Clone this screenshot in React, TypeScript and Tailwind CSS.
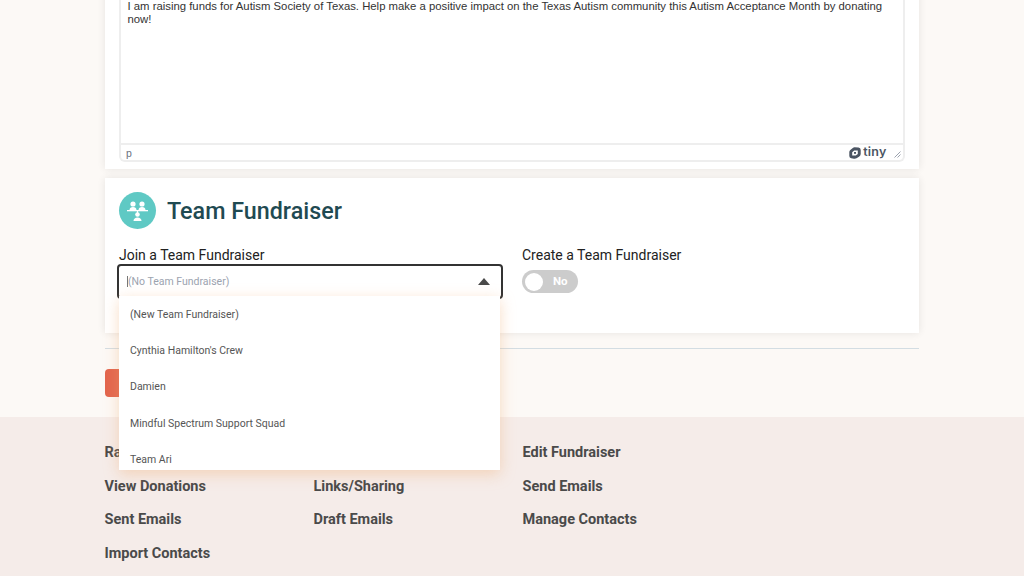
const footerLinks = [
  ["Raise Funds", "Fundraiser Page", "Edit Fundraiser"],
  ["View Donations", "Links/Sharing", "Send Emails"],
  ["Sent Emails", "Draft Emails", "Manage Contacts"],
  ["Import Contacts"],
];

const teams = [
  "(New Team Fundraiser)",
  "Cynthia Hamilton's Crew",
  "Damien",
  "Mindful Spectrum Support Squad",
  "Team Ari",
];

function TeamIcon() {
  return (
    <div className="flex h-[37px] w-[37px] items-center justify-center rounded-full bg-[#5fc9c4]">
      <svg width="23" height="23" viewBox="0 0 23 23" fill="#ffffff">
        <circle cx="7" cy="5" r="2.6" />
        <circle cx="16" cy="5" r="2.6" />
        <path d="M3.5 11c0-2 1.5-3 3.5-3s3.500 1 3.500 3zM12.500 11c0-2 1.500-3 3.500-3s3.500 1 3.500 3z" />
        <rect x="1" y="11" width="21" height="1.300" />
        <rect x="10.900" y="11" width="1.200" height="3" />
        <circle cx="11.500" cy="15.500" r="2.300" />
        <path d="M7.500 22c0-2 1.800-3.400 4-3.400s4 1.400 4 3.400z" />
      </svg>
    </div>
  );
}

function TinyLogo() {
  return (
    <div className="flex items-center gap-[2px] text-[#4b5563]">
      <svg width="12" height="12" viewBox="0 0 12 12">
        <path
          fill="#4b5563"
          fillRule="evenodd"
          d="M5.500 0.300L9.500 0.600Q11.700 0.800 11.700 3V7Q11.700 8.800 10 9.800L7.500 11.300Q6.300 12 5 11.700L2.200 11.200Q0.300 10.800 0.300 9V5Q0.300 3.800 1.300 3L3.800 1Q4.600 0.300 5.500 0.300ZM3.200 5.200V8.600H6.800L8.800 7V3.500H5.200Z"
        />
        <rect x="5" y="5" width="2" height="1.800" fill="#4b5563" />
      </svg>
      <span className="text-[12.500px] font-semibold leading-none font-['Inter',sans-serif] tracking-[0.2px]">tiny</span>
    </div>
  );
}

function Editor() {
  return (
    <section className="mr-[0.5px] h-[190px] bg-white pb-[7px] pl-[14.500px] pr-[14.500px] shadow-[0_0_8px_rgba(0,0,0,0.09)]">
      <div className="flex h-full flex-col rounded-b-[6px] border-x-2 border-b-2 border-[#eeeeee]">
        <div className="flex-1 pl-[6.500px] pr-[8px] pt-[21px] font-['Liberation_Sans',sans-serif] text-[11.330px] leading-[13px] text-[#333333]">
          I am raising funds for Autism Society of Texas. Help make a positive impact on the Texas Autism community this Autism Acceptance Month by donating now!
        </div>
        <div className="flex h-[17px] items-center justify-between border-t-2 border-[#eeeeee] pl-[5px] pr-[2px]">
          <span className="mt-[2px] font-['Liberation_Sans',sans-serif] text-[10.500px] text-[#6b7280]">p</span>
          <div className="flex items-center gap-[7px]">
            <TinyLogo />
            <svg width="7" height="7" viewBox="0 0 7 7" className="mt-[4px]" stroke="#9ca3af" strokeWidth="1">
              <path d="M0.500 6.500L6.500 0.500M3.500 6.500L6.500 3.500" />
            </svg>
          </div>
        </div>
      </div>
    </section>
  );
}

function TeamCard() {
  return (
    <section className="relative mr-[0.5px] mt-[9px] h-[155px] bg-white pl-[14.500px] pr-[14.500px] pt-[14px] shadow-[0_0_8px_rgba(0,0,0,0.09)]">
      <div className="flex items-start gap-[11px]">
        <TeamIcon />
        <h2 className="pt-[1px] text-[23.300px] font-medium leading-[37px] text-[#1f4a52]">Team Fundraiser</h2>
      </div>
      <div className="mt-[17px] flex">
        <div className="relative w-[403px]">
          <div className="text-[14px] leading-[17px] text-[#222222]">Join a Team Fundraiser</div>
          <div className="-mx-[2px] flex h-[35px] w-[386px] items-center justify-between rounded-[4px] border-2 border-[#333333] pl-[8px] pr-[11px]">
            <span className="flex items-center text-[10.500px] text-[#9ca3af]">
              <span className="h-[11px] w-[1px] bg-[#777777]" />
              (No Team Fundraiser)
            </span>
            <span className="h-0 w-0 border-x-[6.500px] border-b-[7px] border-x-transparent border-b-[#4a4a4a]" />
          </div>
          <ul className="absolute left-0 top-[49px] z-10 h-[174px] w-[381px] overflow-hidden bg-white shadow-[0_4px_14px_rgba(240,170,110,0.4)]">
            {teams.map((team) => (
              <li key={team} className="flex h-[36.250px] items-center pl-[11px] pt-[1px] text-[10.500px] text-[#555555]">
                {team}
              </li>
            ))}
          </ul>
        </div>
        <div>
          <div className="text-[14px] leading-[17px] text-[#222222]">Create a Team Fundraiser</div>
          <div className="mt-[6px] flex h-[23px] w-[56px] items-center rounded-full bg-[#cccccc] pl-[3px]">
            <span className="h-[18px] w-[18px] rounded-full bg-white" />
            <span className="ml-[10px] text-[11.500px] font-bold text-white">No</span>
          </div>
        </div>
      </div>
    </section>
  );
}

export default function App() {
  return (
    <div className="h-[576px] overflow-hidden bg-[#fcf9f6] font-['Roboto',sans-serif]">
      <main className="mx-auto -mt-[21px] w-[815px]">
        <Editor />
        <TeamCard />
        <hr className="mr-[0.5px] mt-[15px] border-t border-[#d3dde3]" />
        <button className="mt-[20px] block h-[28px] w-[120px] rounded-[4px] bg-[#e2654d] text-[13px] font-bold text-white">
          Save
        </button>
      </main>
      <footer className="mt-[20px] h-[200px] bg-[#f5ece9] pt-[19px]">
        <div className="mx-auto grid w-[815px] grid-cols-[209px_209px_1fr] text-[14.500px] font-bold leading-[33.500px] text-[#4a4a4a]">
          {footerLinks.flat().map((label) => (
            <a key={label}>{label}</a>
          ))}
        </div>
      </footer>
    </div>
  );
}
